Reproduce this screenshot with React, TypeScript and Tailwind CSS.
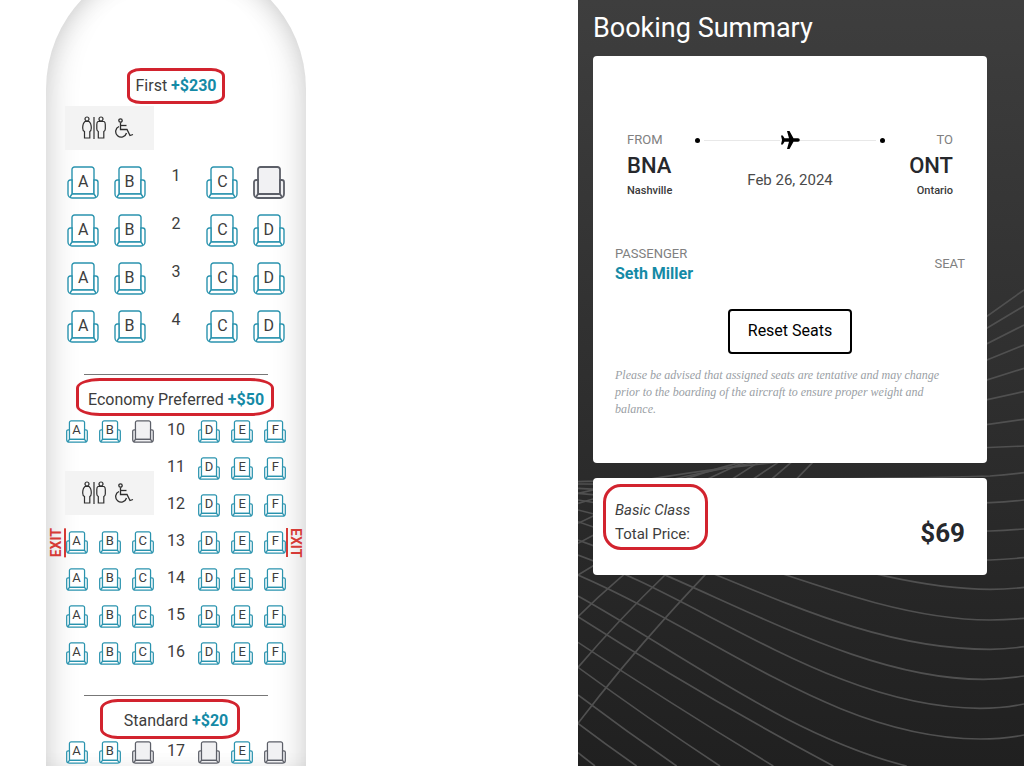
import clsx from "clsx";

type SeatState = "open" | "taken";
type RowData = { number: number; seats: string[]; taken?: string[]; exit?: boolean };

const firstRows: RowData[] = [
  { number: 1, seats: ["A", "B", "", "C", "D"], taken: ["D"] },
  { number: 2, seats: ["A", "B", "", "C", "D"] },
  { number: 3, seats: ["A", "B", "", "C", "D"] },
  { number: 4, seats: ["A", "B", "", "C", "D"] },
];

const full = ["A", "B", "C", "", "D", "E", "F"];

const exitToRear: RowData[] = [
  { number: 13, seats: full, exit: true },
  { number: 14, seats: full },
  { number: 15, seats: full },
  { number: 16, seats: full },
];

function SeatShape({ taken, large }: { taken: boolean; large?: boolean }) {
  return (
    <svg
      viewBox="0 0 32 33"
      className="absolute inset-0 h-full w-full"
      fill={taken ? "#f1f1f3" : "#ffffff"}
      stroke={taken ? "#5c5f68" : "#2a93ae"}
      strokeWidth={large ? (taken ? 1.8 : 1.4) : 1.8}
      aria-hidden="true"
    >
      <path d="M5 28V3.5A2.5 2.5 0 0 1 7.5 1h17A2.5 2.5 0 0 1 27 3.5V28z" />
      <path d="M5 14H3.2A2.2 2.2 0 0 0 1 16.2V28a4 4 0 0 0 4 4h22a4 4 0 0 0 4-4V16.2A2.2 2.2 0 0 0 28.8 14H27v14H5z" />
      <path d="M5 28 3 31M27 28l2 3" />
    </svg>
  );
}

function Seat({ row, letter, state, large }: { row: number; letter: string; state: SeatState; large?: boolean }) {
  const taken = state === "taken";
  return (
    <button
      type="button"
      disabled={taken}
      aria-label={`Seat ${row}${letter}`}
      className={clsx(
        "relative flex justify-center text-[#3d3d3d]",
        large ? "h-[33px] w-8 text-base leading-8" : "h-[23px] w-[22px] text-[13px] leading-5"
      )}
    >
      <SeatShape taken={taken} large={large} />
      {!taken && <span className="relative">{letter}</span>}
    </button>
  );
}

const exitSign =
  "absolute -top-[3px] border-l-2 border-[#d63a36] pl-0.5 text-sm font-bold leading-3 text-[#d63a36] [writing-mode:vertical-rl]";

function SeatRow({ row, large }: { row: RowData; large?: boolean }) {
  return (
    <div className={clsx("relative grid justify-items-center", large ? "h-12 grid-cols-5" : "h-[37px] grid-cols-7")}>
      {row.exit && (
        <>
          <span className={clsx(exitSign, "-left-2.5 rotate-180")}>EXIT</span>
          <span className={clsx(exitSign, "-right-2.5")}>EXIT</span>
        </>
      )}
      {row.seats.map((letter, i) =>
        letter === "" ? (
          <span key={i} className="text-base leading-5 text-[#3d3d3d]">
            {row.number}
          </span>
        ) : (
          <Seat
            key={i}
            row={row.number}
            letter={letter}
            large={large}
            state={row.taken?.includes(letter) ? "taken" : "open"}
          />
        )
      )}
    </div>
  );
}

function Lavatory() {
  return (
    <div
      className="flex h-11 w-[89px] items-center gap-2 bg-[#f3f3f3] pl-[17px]"
      role="img"
      aria-label="Accessible lavatory"
    >
      <svg viewBox="0 0 24 24" className="h-6 w-6" fill="none" stroke="#2e2e2e" strokeWidth="1.2">
        <circle cx="5" cy="3" r="2" />
        <path d="M3 5.500h4c1.300 1 2.300 4 2.300 6.500 0 2-.5 3-1.500 3.500V22H2.500v-6.500C1.300 15 .7 14 .7 12c0-2.500 1-5.500 2.300-6.500z" />
        <path d="M12 1v22" />
        <circle cx="19" cy="3" r="2" />
        <path d="M16 5.500h6c1 .5 1.300 1.500 1.300 3V13c0 1.500-.5 2-1.500 2.500V22h-5.500v-6.500c-1-.5-1.500-1-1.500-2.500V8.500c0-1.500.2-2.500 1.200-3z" />
      </svg>
      <svg viewBox="0 0 20 20" className="h-5 w-5" fill="none" stroke="#2e2e2e" strokeWidth="1.3">
        <circle cx="6.500" cy="2.500" r="1.700" />
        <path d="M6.500 4.500v7h6.500l3 6 3-1" />
        <path d="M6.500 7.500h6" />
        <path d="M5 8.500a5.500 5.500 0 1 0 7.500 6.500" />
      </svg>
    </div>
  );
}

function CabinLabel({ name, price, ring }: { name: string; price: string; ring: string }) {
  return (
    <div className="flex justify-center">
      <h2 className="relative whitespace-nowrap text-base leading-6 text-[#3d3d3d]">
        <span className={clsx("absolute border-[3px] border-[#d2232e]", ring)} />
        {name} <strong className="font-bold text-[#158aa6]">{price}</strong>
      </h2>
    </div>
  );
}

function SeatMap() {
  return (
    <main className="overflow-hidden bg-white">
      <div className="-mt-[41px] ml-[46px] flex min-h-[calc(100vh+41px)] w-[260px] flex-col rounded-t-[130px] bg-white px-3.5 pt-[115px] shadow-[inset_20px_0_30px_-16px_rgba(0,0,0,0.17),inset_-20px_0_30px_-16px_rgba(0,0,0,0.17),inset_0_20px_30px_-16px_rgba(0,0,0,0.1)]">
        <CabinLabel name="First" price="+$230" ring="-inset-x-2 -inset-y-1.5 rounded-[14px/8px]" />
        <div className="mb-4 ml-[5px] mt-2">
          <Lavatory />
        </div>
        {firstRows.map((row) => (
          <SeatRow key={row.number} row={row} large />
        ))}

        <hr className="mx-6 mb-[13px] mt-4 border-[#777]" />
        <CabinLabel name="Economy Preferred" price="+$50" ring="-left-3 -right-2.5 -bottom-1 -top-2.5 rounded-[24px/10px]" />
        <div className="mt-2">
          <SeatRow row={{ number: 10, seats: full, taken: ["C"] }} />
          <div className="grid grid-cols-7">
            <div className="col-span-3 pl-[5px] pt-3.5">
              <Lavatory />
            </div>
            <div className="col-span-4">
              {[11, 12].map((n) => (
                <div key={n} className="grid h-[37px] grid-cols-4 justify-items-center">
                  <span className="text-base leading-5 text-[#3d3d3d]">{n}</span>
                  {["D", "E", "F"].map((letter) => (
                    <Seat key={letter} row={n} letter={letter} state="open" />
                  ))}
                </div>
              ))}
            </div>
          </div>
          {exitToRear.map((row) => (
            <SeatRow key={row.number} row={row} />
          ))}
        </div>

        <hr className="mx-6 mb-[13px] mt-4 border-[#777]" />
        <CabinLabel name="Standard" price="+$20" ring="-left-6 -right-3 -bottom-1.5 -top-2.5 rounded-[18px/10px]" />
        <div className="-mb-3 mt-2">
          <SeatRow row={{ number: 17, seats: full, taken: ["C", "D", "F"] }} />
        </div>
      </div>
    </main>
  );
}

// Falling curves, then the rising ones that cross them
const waves = [
  "M24 878 75 918",
  "M24 790Q110 855 200 918",
  "M24 705Q170 815 320 918",
  "M24 622Q240 780 450 918",
  "M24 547Q300 730 610 918",
  "M24 470Q400 710 790 918",
  "M24 408C350 590 660 830 1010 918",
  "M24 345C450 530 800 835 1230 837Q1300 837 1362 825",
  "M24 285C400 420 800 745 1230 745Q1300 745 1362 732",
  "M24 240C450 390 850 658 1240 658Q1300 658 1362 648",
  "M24 185C500 345 850 568 1260 568Q1310 568 1362 560",
  "M24 150C500 265 900 480 1260 480Q1310 480 1362 475",
  "M24 120C500 190 900 388 1260 388Q1310 388 1362 382",
  "M24 100C450 130 900 300 1260 300Q1310 298 1362 293",
  "M24 85C450 100 900 215 1260 213Q1310 211 1362 207",
  "M24 72C450 70 900 135 1260 128Q1310 126 1362 120",
  "M24 65C350 55 900 60 1260 48Q1310 45 1362 38",
  "M24 790Q150 625 285 475T725 10Q1000-260 1362-510",
  "M24 622Q150 475 285 345T660 10Q950-220 1362-462",
  "M24 470Q140 355 285 245T620 10Q930-190 1362-405",
  "M24 345Q240 215 560 10Q900-160 1362-345",
  "M24 250Q220 145 510 12Q900-130 1362-275",
  "M24 190Q270 70 500 10Q900-105 1362-205",
  "M24 130Q420 10 1362-122",
  "M24 100Q500-10 1362-42",
];

function WaveBackground() {
  return (
    <svg
      viewBox="24 -1380 1338 2298"
      preserveAspectRatio="xMidYMid slice"
      className="absolute inset-0 h-full w-full"
      fill="none"
      stroke="#505050"
      strokeWidth="5"
      aria-hidden="true"
    >
      {waves.map((d) => (
        <path key={d} d={d} />
      ))}
    </svg>
  );
}

function RouteLine() {
  return (
    <div className="flex items-center">
      <span className="h-[5px] w-[5px] rounded-full bg-black" />
      <span className="ml-1 h-px flex-1 bg-[#e8e8e8]" />
      <svg viewBox="0 0 20 20" className="h-5 w-5" fill="#000000" aria-hidden="true">
        <path d="M7 1h2.500l4 7.200H18a1.800 1.800 0 0 1 0 3.600h-4.500l-4 7.200H7l2-7.200H4.500L2.800 14.500H1L2 10 1 5.500h1.800L4.500 8.200H9z" />
      </svg>
      <span className="mr-1 h-px flex-1 bg-[#e8e8e8]" />
      <span className="h-[5px] w-[5px] rounded-full bg-black" />
    </div>
  );
}

function Airport({ label, code, city, right }: { label: string; code: string; city: string; right?: boolean }) {
  return (
    <div className={clsx("w-[68px]", right && "text-right")}>
      <div className="text-[13px] leading-5 text-[#808080]">{label}</div>
      <div className="text-[22px] font-medium leading-8 text-[#26282c]">{code}</div>
      <div className="text-[11px] font-medium leading-[18px] text-[#3a3a3a]">{city}</div>
    </div>
  );
}

function BookingSummary() {
  return (
    <aside className="relative bg-linear-to-b from-[#3e3e3e] to-[#202020] pl-[15px] pr-[37px]">
      <WaveBackground />
      <div className="relative">
        <h1 className="py-2 text-[27px] leading-10 text-white">Booking Summary</h1>

        <section className="rounded bg-white px-[22px] pb-[45px] pt-[74px]">
          <div className="flex px-3">
            <Airport label="FROM" code="BNA" city="Nashville" />
            <div className="flex-1">
              <RouteLine />
              <p className="mt-[18px] text-center text-[15px] leading-6 text-[#4a4a4a]">Feb 26, 2024</p>
            </div>
            <Airport label="TO" code="ONT" city="Ontario" right />
          </div>

          <div className="mt-11 flex items-center justify-between">
            <div>
              <div className="text-[13px] leading-5 text-[#808080]">PASSENGER</div>
              <div className="text-base font-bold leading-5 text-[#158aa6]">Seth Miller</div>
            </div>
            <div className="text-[13px] leading-5 text-[#808080]">SEAT</div>
          </div>

          <button
            type="button"
            className="mx-auto mt-[25px] block h-[45px] w-[124px] rounded border-2 border-black bg-white pb-0.5 text-base text-black"
          >
            Reset Seats
          </button>

          <p className="mt-[13px] pr-2 font-['Liberation_Serif',serif] text-xs italic leading-[17px] text-[#9aa0a5]">
            Please be advised that assigned seats are tentative and may change prior to the boarding of the aircraft to
            ensure proper weight and balance.
          </p>
        </section>

        <section className="relative mt-[15px] flex items-start justify-between rounded bg-white px-[22px] pb-[22px] pt-5">
          <div className="absolute left-2.5 top-1.5 h-[66px] w-[105px] rounded-[18px] border-[3px] border-[#d2232e]" />
          <div className="text-[15px] leading-6 text-[#3d3d3d]">
            <div className="italic">Basic Class</div>
            <div>Total Price:</div>
          </div>
          <div className="pt-[15px] text-[26px] font-bold leading-10 text-[#26282c]">$69</div>
        </section>
      </div>
    </aside>
  );
}

export default function App() {
  return (
    <div className="grid min-h-screen grid-cols-[578fr_446fr] font-['Roboto',sans-serif]">
      <SeatMap />
      <BookingSummary />
    </div>
  );
}
